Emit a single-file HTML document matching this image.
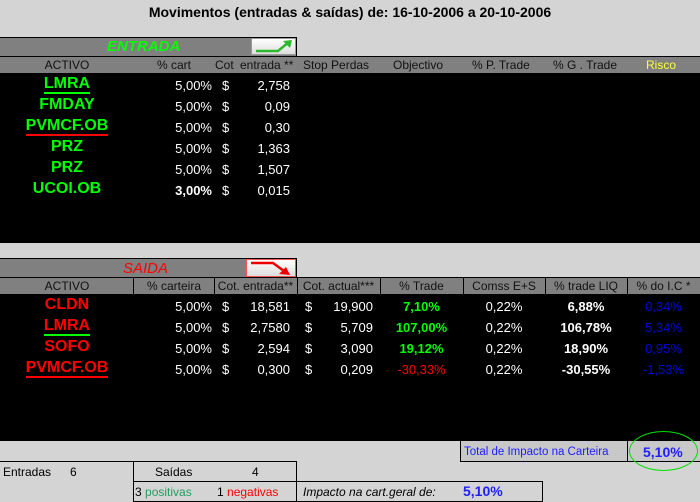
<!DOCTYPE html>
<html><head><style>
body{margin:0;width:700px;height:502px;background:#d4d4d4;font-family:"Liberation Sans",sans-serif;position:relative;overflow:hidden}
div{position:absolute}
.t{white-space:nowrap;font-size:12px}
.c{text-align:center}
.r{text-align:right}
.n{font-weight:bold;font-size:16px;text-align:center;width:134px;left:0}
.w{color:#fff;font-size:13px}
.hd{color:#111;font-size:12px}
</style></head><body>
<div class="t" style="left:0;width:700px;top:4px;text-align:center;font-weight:bold;font-size:14px">Movimentos (entradas &amp; saídas) de: 16-10-2006 a 20-10-2006</div>

<!-- ENTRADA -->
<div style="left:0;top:37px;width:297px;height:19px;background:#808080;border-top:1px solid #000;border-right:1px solid #000;box-sizing:border-box"></div>
<div class="t" style="left:107px;top:38px;color:#00ff00;font-weight:bold;font-style:italic;font-size:15px">ENTRADA</div>
<div style="left:251px;top:38px;width:45px;height:17px;background:linear-gradient(#fff,#ddd);border:1px solid #999;box-sizing:border-box">
<svg width="45" height="17" style="position:absolute;left:-1px;top:-1px"><path d="M5 13 H27 L38 4" stroke="#2db82d" stroke-width="2.5" fill="none"/><path d="M32 3 L41 2 L39 10 Z" fill="#2db82d"/></svg></div>
<div style="left:0;top:56px;width:700px;height:17px;background:#808080;border-top:1px solid #000;box-sizing:border-box"></div>
<div class="t hd c" style="left:0;width:134px;top:58px">ACTIVO</div>
<div class="t hd r" style="left:120px;width:71px;top:58px">% cart</div>
<div class="t hd" style="left:215px;top:58px">Cot</div>
<div class="t hd" style="left:240px;top:58px">entrada **</div>
<div class="t hd" style="left:303px;top:58px">Stop Perdas</div>
<div class="t hd" style="left:393px;top:58px">Objectivo</div>
<div class="t hd" style="left:472px;top:58px">% P. Trade</div>
<div class="t hd" style="left:553px;top:58px">% G . Trade</div>
<div class="t" style="left:646px;top:58px;color:#ffff40">Risco</div>
<div style="left:0;top:73px;width:700px;height:170px;background:#000"></div>

<div class="t n" style="top:75px;color:#00ff00"><span style="border-bottom:2px solid #00ff00">LMRA</span></div>
<div class="t n" style="top:96px;color:#00ff00">FMDAY</div>
<div class="t n" style="top:117px;color:#00ff00"><span style="border-bottom:2px solid #f00">PVMCF.OB</span></div>
<div class="t n" style="top:138px;color:#00ff00">PRZ</div>
<div class="t n" style="top:159px;color:#00ff00">PRZ</div>
<div class="t n" style="top:180px;color:#00ff00">UCOI.OB</div>

<div class="t w r" style="left:140px;width:72px;top:78px">5,00%</div>
<div class="t w r" style="left:140px;width:72px;top:99px">5,00%</div>
<div class="t w r" style="left:140px;width:72px;top:120px">5,00%</div>
<div class="t w r" style="left:140px;width:72px;top:141px">5,00%</div>
<div class="t w r" style="left:140px;width:72px;top:162px">5,00%</div>
<div class="t w r" style="left:140px;width:72px;top:183px;font-weight:bold">3,00%</div>
<div class="t w" style="left:222px;top:78px">$</div><div class="t w" style="left:222px;top:99px">$</div><div class="t w" style="left:222px;top:120px">$</div><div class="t w" style="left:222px;top:141px">$</div><div class="t w" style="left:222px;top:162px">$</div><div class="t w" style="left:222px;top:183px">$</div>
<div class="t w r" style="left:230px;width:60px;top:78px">2,758</div>
<div class="t w r" style="left:230px;width:60px;top:99px">0,09</div>
<div class="t w r" style="left:230px;width:60px;top:120px">0,30</div>
<div class="t w r" style="left:230px;width:60px;top:141px">1,363</div>
<div class="t w r" style="left:230px;width:60px;top:162px">1,507</div>
<div class="t w r" style="left:230px;width:60px;top:183px">0,015</div>

<!-- SAIDA -->
<div style="left:0;top:258px;width:297px;height:19px;background:#808080;border-top:1px solid #000;border-right:1px solid #000;box-sizing:border-box"></div>
<div class="t" style="left:123px;top:260px;color:#f00;font-style:italic;font-size:15px">SAIDA</div>
<div style="left:246px;top:259px;width:50px;height:18px;background:linear-gradient(#fff,#ddd);border:1px solid #e55;box-sizing:border-box">
<svg width="50" height="18" style="position:absolute;left:-1px;top:-1px"><path d="M5 4 H27 L38 12" stroke="#e00" stroke-width="2.5" fill="none"/><path d="M33 15 L44 16 L40 8 Z" fill="#e00"/></svg></div>
<div style="left:0;top:277px;width:700px;height:17px;background:#808080;border-top:1px solid #000;box-sizing:border-box"></div>
<div style="left:133px;top:277px;width:1px;height:17px;background:#000"></div>
<div style="left:214px;top:277px;width:1px;height:17px;background:#000"></div>
<div style="left:297px;top:277px;width:1px;height:17px;background:#000"></div>
<div style="left:380px;top:277px;width:1px;height:17px;background:#000"></div>
<div style="left:463px;top:277px;width:1px;height:17px;background:#000"></div>
<div style="left:545px;top:277px;width:1px;height:17px;background:#000"></div>
<div style="left:627px;top:277px;width:1px;height:17px;background:#000"></div>
<div class="t hd c" style="left:0;width:134px;top:279px">ACTIVO</div>
<div class="t hd c" style="left:134px;width:80px;top:279px">% carteira</div>
<div class="t hd c" style="left:214px;width:83px;top:279px">Cot. entrada**</div>
<div class="t hd c" style="left:297px;width:83px;top:279px">Cot. actual***</div>
<div class="t hd c" style="left:380px;width:83px;top:279px">% Trade</div>
<div class="t hd c" style="left:463px;width:82px;top:279px">Comss E+S</div>
<div class="t hd c" style="left:545px;width:82px;top:279px">% trade LIQ</div>
<div class="t hd c" style="left:627px;width:73px;top:279px">% do I.C *</div>
<div style="left:0;top:294px;width:700px;height:147px;background:#000"></div>

<div class="t n" style="top:296px;color:#f00">CLDN</div>
<div class="t n" style="top:317px;color:#f00"><span style="border-bottom:2px solid #00ff00">LMRA</span></div>
<div class="t n" style="top:338px;color:#f00">SOFO</div>
<div class="t n" style="top:359px;color:#f00"><span style="border-bottom:2px solid #f00">PVMCF.OB</span></div>

<div class="t w r" style="left:140px;width:72px;top:299px">5,00%</div>
<div class="t w r" style="left:140px;width:72px;top:320px">5,00%</div>
<div class="t w r" style="left:140px;width:72px;top:341px">5,00%</div>
<div class="t w r" style="left:140px;width:72px;top:362px">5,00%</div>
<div class="t w" style="left:222px;top:299px">$</div><div class="t w" style="left:222px;top:320px">$</div><div class="t w" style="left:222px;top:341px">$</div><div class="t w" style="left:222px;top:362px">$</div>
<div class="t w r" style="left:230px;width:60px;top:299px">18,581</div>
<div class="t w r" style="left:230px;width:60px;top:320px">2,7580</div>
<div class="t w r" style="left:230px;width:60px;top:341px">2,594</div>
<div class="t w r" style="left:230px;width:60px;top:362px">0,300</div>
<div class="t w" style="left:305px;top:299px">$</div><div class="t w" style="left:305px;top:320px">$</div><div class="t w" style="left:305px;top:341px">$</div><div class="t w" style="left:305px;top:362px">$</div>
<div class="t w r" style="left:310px;width:63px;top:299px">19,900</div>
<div class="t w r" style="left:310px;width:63px;top:320px">5,709</div>
<div class="t w r" style="left:310px;width:63px;top:341px">3,090</div>
<div class="t w r" style="left:310px;width:63px;top:362px">0,209</div>
<div class="t c" style="left:380px;width:83px;top:299px;color:#00ff00;font-weight:bold;font-size:13px">7,10%</div>
<div class="t c" style="left:380px;width:83px;top:320px;color:#00ff00;font-weight:bold;font-size:13px">107,00%</div>
<div class="t c" style="left:380px;width:83px;top:341px;color:#00ff00;font-weight:bold;font-size:13px">19,12%</div>
<div class="t c" style="left:380px;width:83px;top:362px;color:#f00;font-size:13px">-30,33%</div>
<div class="t w c" style="left:463px;width:82px;top:299px">0,22%</div>
<div class="t w c" style="left:463px;width:82px;top:320px">0,22%</div>
<div class="t w c" style="left:463px;width:82px;top:341px">0,22%</div>
<div class="t w c" style="left:463px;width:82px;top:362px">0,22%</div>
<div class="t w c" style="left:545px;width:82px;top:299px;font-weight:bold">6,88%</div>
<div class="t w c" style="left:545px;width:82px;top:320px;font-weight:bold">106,78%</div>
<div class="t w c" style="left:545px;width:82px;top:341px;font-weight:bold">18,90%</div>
<div class="t w c" style="left:545px;width:82px;top:362px;font-weight:bold">-30,55%</div>
<div class="t c" style="left:627px;width:73px;top:299px;color:#0000e0;font-size:13px">0,34%</div>
<div class="t c" style="left:627px;width:73px;top:320px;color:#0000e0;font-size:13px">5,34%</div>
<div class="t c" style="left:627px;width:73px;top:341px;color:#0000e0;font-size:13px">0,95%</div>
<div class="t c" style="left:627px;width:73px;top:362px;color:#0000e0;font-size:13px">-1,53%</div>

<!-- bottom -->
<div style="left:460px;top:441px;width:240px;height:21px;border-left:1px solid #000;border-bottom:1px solid #000;box-sizing:border-box;background:#c8c8c8"></div>
<div style="left:627px;top:441px;width:1px;height:21px;background:#000"></div>
<div class="t" style="left:464px;top:446px;color:#2020ff;font-size:11.5px">Total de Impacto na Carteira</div>
<div class="t" style="left:643px;top:444px;color:#2020ff;font-weight:bold;font-size:14px">5,10%</div>
<div style="left:629px;top:431px;width:69px;height:40px;border:1px solid #00e000;border-radius:50%;box-sizing:border-box"></div>

<div style="left:0;top:461px;width:297px;height:21px;border-top:1px solid #000;border-right:1px solid #000;box-sizing:border-box"></div>
<div style="left:133px;top:461px;width:1px;height:41px;background:#000"></div>
<div style="left:133px;top:481px;width:410px;height:21px;border:1px solid #000;box-sizing:border-box"></div>
<div style="left:296px;top:481px;width:1px;height:21px;background:#000"></div>
<div class="t" style="left:3px;top:465px">Entradas</div>
<div class="t" style="left:70px;top:465px">6</div>
<div class="t" style="left:155px;top:465px">Saídas</div>
<div class="t" style="left:252px;top:465px">4</div>
<div class="t" style="left:135px;top:485px">3 <span style="color:#20a060">positivas</span></div>
<div class="t" style="left:217px;top:485px">1 <span style="color:#f00">negativas</span></div>
<div class="t" style="left:303px;top:485px;font-style:italic">Impacto na cart.geral de:</div>
<div class="t" style="left:463px;top:483px;color:#2020ff;font-weight:bold;font-size:14px">5,10%</div>
</body></html>
